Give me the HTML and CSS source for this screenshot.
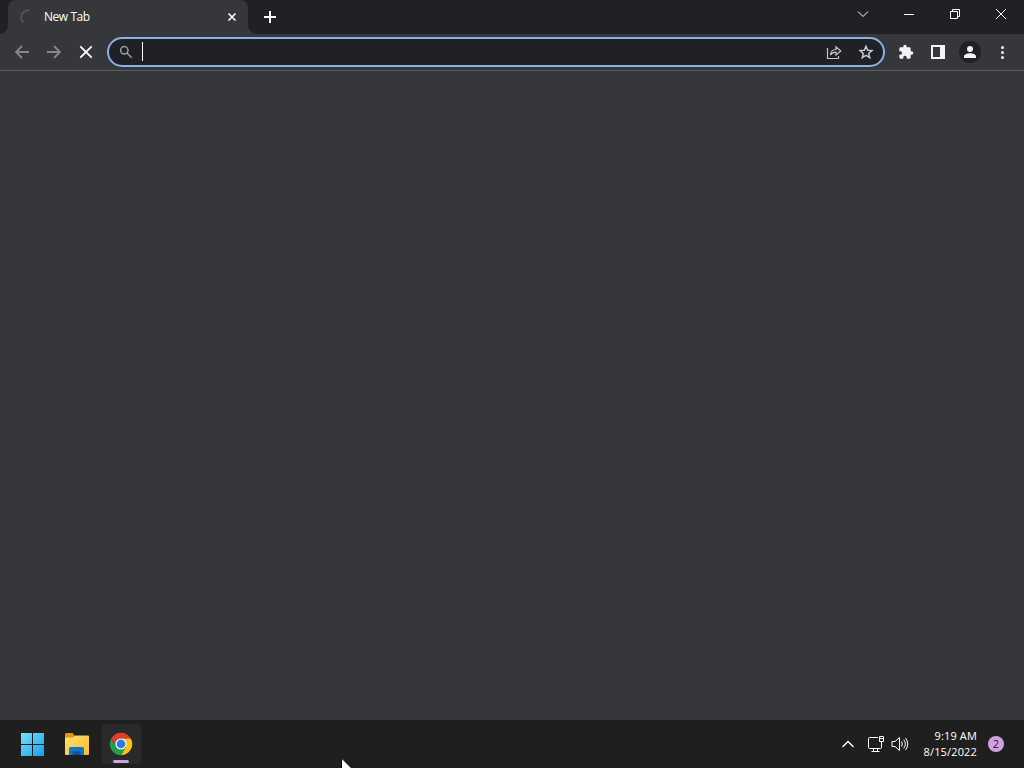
FILE: index.html
```html
<!DOCTYPE html>
<html lang="en">
<head>
    <meta charset="UTF-8">
    <meta name="viewport" content="width=device-width, initial-scale=1.0">
    <title>New Tab</title>
    <link rel="stylesheet" href="styles.css">
</head>
<body>
    <div class="tab-strip">
        <div class="tab">
            <svg class="spinner" width="16" height="16" viewBox="0 0 16 16"><path d="M3.500 13.500A7 7 0 0 1 9 1.400"/></svg>
            <span class="tab-title">New Tab</span>
            <svg class="tab-close" width="16" height="16" viewBox="0 0 16 16"><path d="M4.500 4.500l7 7M11.500 4.500l-7 7"/></svg>
        </div>
        <div class="new-tab">
            <svg width="14" height="14" viewBox="0 0 14 14"><path d="M7 1v12M1 7h12"/></svg>
        </div>
        <div class="window-controls">
            <div class="control"><svg width="12" height="12" viewBox="0 0 12 12"><path d="M1 3.500l5 5 5-5"/></svg></div>
            <div class="control"><svg width="10" height="12" viewBox="0 0 10 12"><path d="M0 6.500h10"/></svg></div>
            <div class="control"><svg width="12" height="12" viewBox="0 0 12 12"><path d="M1.500 3.500h7v7h-7zM3.500 3.500v-2h7v7h-2"/></svg></div>
            <div class="control"><svg width="12" height="12" viewBox="0 0 12 12"><path d="M1 1l10 10M11 1L1 11"/></svg></div>
        </div>
    </div>

    <div class="toolbar">
        <div class="tool dim"><svg width="16" height="16" viewBox="0 0 16 16"><path d="M15 8H2.500M8 2L2 8l6 6"/></svg></div>
        <div class="tool dim"><svg width="16" height="16" viewBox="0 0 16 16"><path d="M1 8h12.500M8 2l6 6-6 6"/></svg></div>
        <div class="tool"><svg width="16" height="16" viewBox="0 0 16 16"><path d="M2.300 2.300l11.400 11.400M13.700 2.300L2.300 13.700"/></svg></div>
        <div class="omnibox">
            <svg class="search" width="14" height="14" viewBox="0 0 14 14"><circle cx="5.300" cy="5.300" r="3.700"/><path d="M8 8l4.700 4.700"/></svg>
            <div class="caret"></div>
            <svg class="share" width="16" height="16" viewBox="0 0 16 16"><path d="M1.500 4v10.500h11V12M4.500 11c.3-4 2.300-5.500 5.500-5.500V2.800L14.800 7 10 11V8.200C7.500 8.200 5.800 8.800 4.500 11z"/></svg>
            <svg class="star" width="16" height="16" viewBox="0 0 16 16"><path d="M8 2.300l1.700 3.900 4.200.4-3.200 2.800 1 4.200L8 11.400l-3.700 2.200 1-4.200-3.200-2.800 4.200-.4z"/></svg>
        </div>
        <div class="tool">
            <svg class="solid" width="16" height="16" viewBox="0 0 24 24"><path d="M20.500 11H19V7a2 2 0 0 0-2-2h-4V3.500a2.500 2.500 0 0 0-5 0V5H4a2 2 0 0 0-2 2v3.800h1.500a2.700 2.700 0 0 1 0 5.400H2V20a2 2 0 0 0 2 2h3.800v-1.500a2.700 2.700 0 0 1 5.400 0V22H17a2 2 0 0 0 2-2v-4h1.500a2.500 2.500 0 0 0 0-5z"/></svg>
        </div>
        <div class="tool">
            <svg class="solid" width="14" height="14" viewBox="0 0 14 14"><path fill-rule="evenodd" d="M0 0h14v14H0zM2 2v10h7V2z"/></svg>
        </div>
        <div class="tool">
            <div class="profile"><svg class="solid" width="12" height="12" viewBox="0 0 12 12"><circle cx="6" cy="3" r="3"/><path d="M0 12v-1.500C0 8.300 3.500 7.300 6 7.300s6 1 6 3.200V12z"/></svg></div>
        </div>
        <div class="tool">
            <svg class="solid" width="4" height="14" viewBox="0 0 4 14"><circle cx="2.500" cy="2.500" r="1.500"/><circle cx="2.500" cy="7.500" r="1.500"/><circle cx="2.500" cy="12.500" r="1.500"/></svg>
        </div>
    </div>

    <div class="page"></div>

    <div class="taskbar">
        <div class="app">
            <svg width="24" height="24" viewBox="0 0 24 24">
                <defs>
                    <linearGradient id="win" x1="0" y1="0" x2="24" y2="24" gradientUnits="userSpaceOnUse">
                        <stop offset="0" stop-color="#7be0fb"/>
                        <stop offset="1" stop-color="#139ee8"/>
                    </linearGradient>
                </defs>
                <path fill="url(#win)" d="M0 1h11v11H0zM12 1h11v11H12zM0 13h11v11H0zM12 13h11v11H12z"/>
            </svg>
        </div>
        <div class="app">
            <svg width="26" height="24" viewBox="0 0 26 24">
                <defs>
                    <linearGradient id="folder" x1="0" y1="0" x2="1" y2="1">
                        <stop offset="0" stop-color="#ffdf73"/>
                        <stop offset="1" stop-color="#f7bd2b"/>
                    </linearGradient>
                </defs>
                <path fill="#d99a12" d="M1 2.500Q1 1 2.500 1h6L11 4v4H1z"/>
                <path fill="url(#folder)" d="M1 5.500h8L11.500 3.500H24q1 0 1 1V22q0 1-1 1H2q-1 0-1-1z"/>
                <path fill="#1674c5" d="M5 23v-6.500Q5 15 6.500 15h12q1.500 0 1.500 1.500V23z"/>
                <path fill="#0c569e" d="M8.500 23v-2.500q0-1 1-1h6q1 0 1 1V23z"/>
            </svg>
        </div>
        <div class="app active">
            <svg width="24" height="24" viewBox="0 0 24 24">
                <path fill="#e33b2e" d="M2.300 6.400A11.200 11.200 0 0 1 21.700 6.400H12L7.200 14.800z"/>
                <path fill="#fbc116" d="M12 6.400h9.700A11.200 11.200 0 0 1 12 23.200l4.850-8.400z"/>
                <path fill="#239f4b" d="M2.300 6.400l4.850 8.400L12 17.600l4.850-2.800L12 23.200A11.200 11.200 0 0 1 2.300 6.400z"/>
                <circle cx="12" cy="12" r="5.600" fill="#fff"/>
                <circle cx="12" cy="12" r="4.400" fill="#2b7de9"/>
            </svg>
            <div class="indicator"></div>
        </div>
        <div class="tray">
            <svg class="tray-arrow" width="12" height="12" viewBox="0 0 12 12"><path d="M.5 9L6 3.500 11.500 9"/></svg>
            <svg class="network" width="18" height="18" viewBox="0 0 18 18"><path d="M11 2.500H2.500q-1 0-1 1v9q0 1 1 1h11q1 0 1-1V8M6.500 13.500v3M10.500 13.500v3M4.500 16.500h8M12.500 1.500h4v5h-4zM12.500 3.500h4M14.500 6.500v4"/></svg>
            <svg class="speaker" width="18" height="18" viewBox="0 0 18 18"><path d="M1 6.500h3L8.500 2.500v13L4 11.500H1zM10.500 6.500q1.800 2.500 0 5M12.700 4.700q3.300 4.300 0 8.600M14.500 3q4.500 6 0 12"/></svg>
            <div class="clock">
                <div class="time">9:19 AM</div>
                <div class="date">8/15/2022</div>
            </div>
            <div class="badge">2</div>
        </div>
    </div>

    <svg class="cursor" width="12" height="9" viewBox="0 0 12 9"><path d="M.5-1v12h12z"/></svg>
</body>
</html>
```
FILE: styles.css
```css
body {
    margin: 0;
    height: 100vh;
    display: flex;
    flex-direction: column;
    overflow: hidden;
    background-color: #36373a;
    color: #fff;
    font-family: "Open Sans", "Noto Sans", sans-serif;
    font-size: 12px;
}

svg {
    display: block;
    flex: none;
    fill: none;
    stroke: #fff;
}

/* Tab strip */
.tab-strip {
    display: flex;
    height: 34px;
    padding-left: 8px;
    background-color: #202124;
}

.tab {
    position: relative;
    display: flex;
    align-items: center;
    box-sizing: border-box;
    width: 240px;
    padding: 0 8px 0 12px;
    border-radius: 8px 8px 0 0;
    background-color: #36373a;
}

.tab::before,
.tab::after {
    content: "";
    position: absolute;
    bottom: 0;
    width: 8px;
    height: 8px;
}

.tab::before {
    left: -8px;
    background: radial-gradient(circle at 0 0, transparent 7.5px, #36373a 8px);
}

.tab::after {
    right: -8px;
    background: radial-gradient(circle at 100% 0, transparent 7.5px, #36373a 8px);
}

.spinner {
    stroke: #54575b;
    stroke-width: 1.6;
}

.tab-title {
    flex: 1;
    margin-left: 8px;
    padding-bottom: 2px;
    letter-spacing: -0.45px;
}

.tab-close {
    stroke-width: 1.6;
}

.new-tab {
    display: flex;
    align-items: center;
    margin-left: 15px;
}

.new-tab svg {
    stroke-width: 2;
}

.window-controls {
    display: flex;
    margin-left: auto;
    height: 28px;
}

.control {
    display: flex;
    align-items: center;
    justify-content: center;
    width: 46px;
}

/* Toolbar */
.toolbar {
    display: flex;
    align-items: center;
    height: 36px;
    padding: 0 6px;
    border-bottom: 1px solid #5c5d60;
}

.tool {
    display: flex;
    align-items: center;
    justify-content: center;
    width: 32px;
}

.tool svg {
    stroke-width: 1.8;
}

.dim svg {
    stroke: #85878a;
}

svg.solid {
    fill: #f1f3f4;
    stroke: none;
}

.omnibox {
    flex: 1;
    display: flex;
    align-items: center;
    box-sizing: border-box;
    height: 30px;
    margin: 0 5px;
    padding: 0 9px 0 10px;
    border: 2px solid #8ab0e4;
    border-radius: 15px;
    background-color: #202126;
}

.search {
    stroke: #9a9ca0;
    stroke-width: 1.5;
}

.caret {
    width: 1px;
    height: 19px;
    margin-left: 9px;
    margin-bottom: 2px;
    background-color: #fff;
}

.share {
    margin-left: auto;
    stroke: #c3c5c8;
    stroke-width: 1.2;
}

.star {
    margin-left: 16px;
    stroke: #c8cacd;
    stroke-width: 1.5;
}

.profile {
    display: flex;
    align-items: center;
    justify-content: center;
    width: 22px;
    height: 22px;
    border-radius: 50%;
    background-color: #202124;
}

.page {
    flex: 1;
}

/* Taskbar */
.taskbar {
    display: flex;
    align-items: center;
    gap: 4px;
    height: 48px;
    padding: 0 20px 0 13px;
    background-color: #1f1f1f;
}

.app {
    position: relative;
    display: flex;
    align-items: center;
    justify-content: center;
    width: 40px;
    height: 40px;
}

.app svg {
    stroke: none;
}

.active {
    border-radius: 4px;
    background-color: #2a2a2a;
}

.indicator {
    position: absolute;
    left: 12px;
    bottom: 1px;
    width: 16px;
    height: 3px;
    border-radius: 2px;
    background-color: #cda3d9;
}

.tray {
    display: flex;
    align-items: center;
    margin-left: auto;
}

.tray-arrow {
    stroke-width: 1.3;
}

.network {
    margin-left: 13px;
}

.speaker {
    margin-left: 6px;
}

.clock {
    width: 68px;
    font-size: 11px;
    line-height: 16px;
    letter-spacing: 0.15px;
    text-align: right;
}

.badge {
    width: 16px;
    height: 16px;
    margin-left: 11px;
    border-radius: 50%;
    background-color: #d3a0df;
    color: #222;
    font-size: 11px;
    line-height: 16px;
    text-align: center;
}

.cursor {
    position: absolute;
    left: 341px;
    bottom: 0;
    fill: #fff;
    stroke: #000;
}
```
